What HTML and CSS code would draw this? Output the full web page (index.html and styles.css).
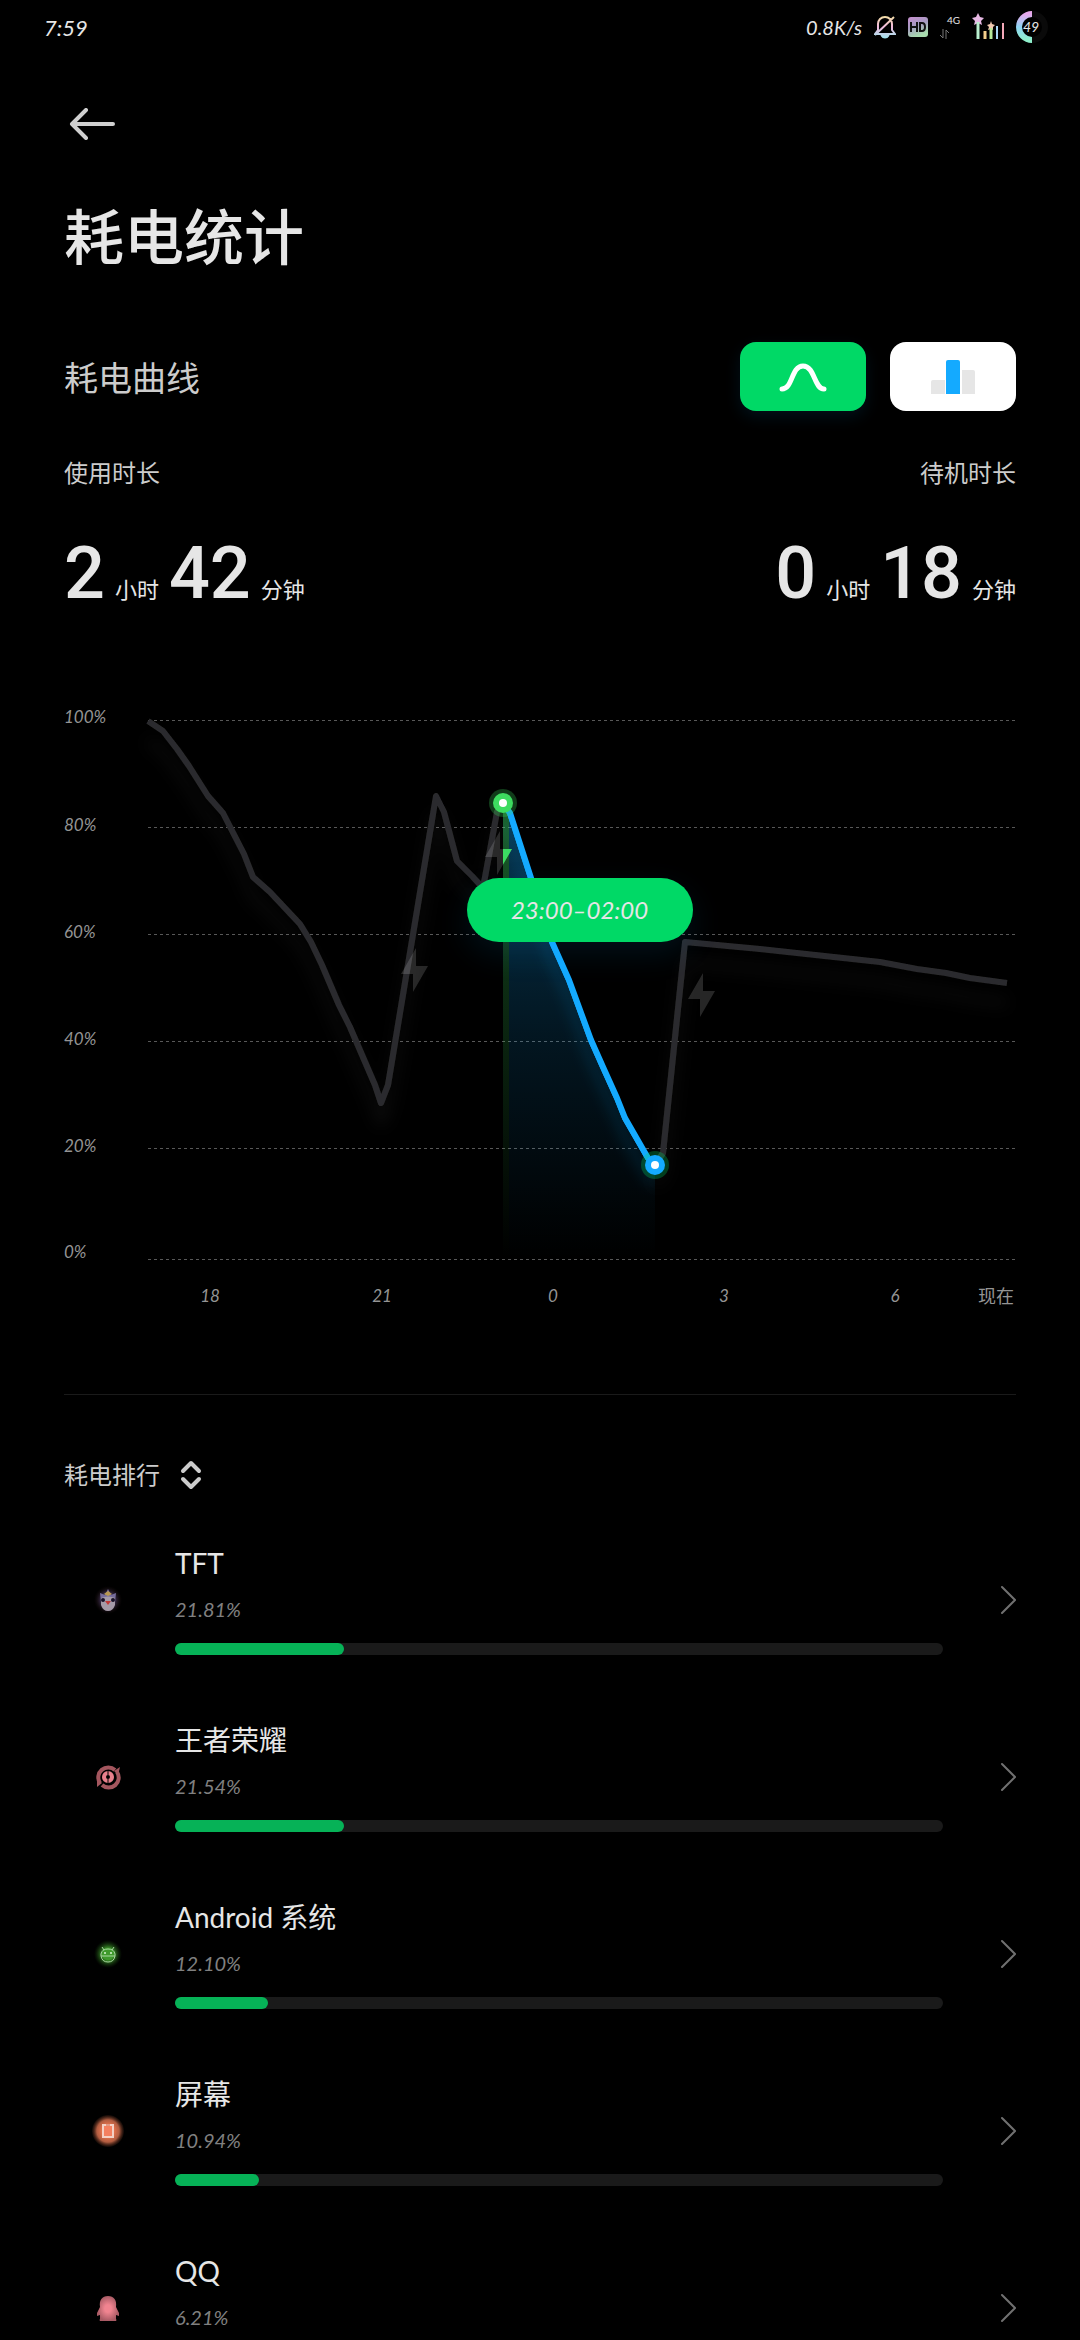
FILE: index.html
```
<!DOCTYPE html>
<html lang="zh-CN">
<head>
  <meta charset="UTF-8">
  <meta name="viewport" content="width=device-width, initial-scale=1.0">
  <title>耗电统计</title>
  <link rel="stylesheet" href="styles.css">
</head>
<body>
  <div class="page">
    <div class="status-bar">
      <span class="clock">7:59</span>
      <div class="status-icons">
        <span class="speed">0.8K/s</span>
        <svg width="22" height="24" viewBox="0 0 22 24" fill="none" stroke="url(#holo)" stroke-width="2">
          <defs>
            <linearGradient id="holo" x1="0" y1="0" x2="0" y2="24" gradientUnits="userSpaceOnUse">
              <stop offset="0" stop-color="#f3e3a0"/>
              <stop offset=".5" stop-color="#f0b8dc"/>
              <stop offset="1" stop-color="#9be8f0"/>
            </linearGradient>
          </defs>
          <path d="M1 19h20l-3-4V9c0-4-3-7-7-7S4 5 4 9v6zM1 20L20 2"/>
          <path d="M8 21c1 2 5 2 6 0z" fill="#9be8f0"/>
        </svg>
        <svg width="20" height="22" viewBox="0 0 20 22">
          <defs>
            <linearGradient id="hd" x1="0" y1="0" x2=".4" y2="1">
              <stop offset="0" stop-color="#c78fd0"/>
              <stop offset=".5" stop-color="#a59ac0"/>
              <stop offset="1" stop-color="#a8dcae"/>
            </linearGradient>
          </defs>
          <rect y="1" width="20" height="20" rx="3" fill="url(#hd)"/>
          <path d="M3 6v10M9 6v10M3 11h6M12 7v8h2c2 0 3-2 3-4s-1-4-3-4z" fill="none" stroke="#111" stroke-width="2"/>
        </svg>
        <div class="network">
          <span>4G</span>
          <svg width="10" height="10" viewBox="0 0 10 10" fill="none" stroke="#777" stroke-width="1">
            <path d="M3 0v9L0 6M6 10V1l3 3"/>
          </svg>
        </div>
        <svg width="32" height="28" viewBox="0 0 32 28">
          <path d="M6 0l2 4 4 1-3 3 1 4-4-2-4 2 1-4-3-3 4-1z" fill="#e6b8e4"/>
          <path d="M19 8l1 3 3 1-2 2v3l-2-1-3 1 1-3-2-2 3-1z" fill="#f0c8b0"/>
          <path d="M6 9v17" stroke="#b9f0cf" stroke-width="3"/>
          <path d="M13 18v8" stroke="#f4d08c" stroke-width="3"/>
          <path d="M19 15v11" stroke="#b6e89a" stroke-width="3"/>
          <path d="M25 13v13" stroke="#a8d4f4" stroke-width="2"/>
          <path d="M31 10v16" stroke="#f4a8b8" stroke-width="2"/>
        </svg>
        <svg width="32" height="32" viewBox="0 0 32 32">
          <defs>
            <linearGradient id="ring" x1="0" y1="0" x2="0" y2="1">
              <stop offset="0" stop-color="#e8a8ec"/>
              <stop offset=".5" stop-color="#8fd4f4"/>
              <stop offset="1" stop-color="#8ff0cc"/>
            </linearGradient>
          </defs>
          <circle cx="16" cy="16" r="13" fill="none" stroke="#0a0a0a" stroke-width="6"/>
          <path d="M16 3a13 13 0 0 0 0 26" fill="none" stroke="url(#ring)" stroke-width="6"/>
          <text class="battery-text" x="15" y="21" text-anchor="middle">49</text>
        </svg>
      </div>
    </div>

    <header class="header">
      <button class="back" aria-label="返回">
        <svg width="54" height="32" viewBox="0 0 54 32" fill="none" stroke="#d0d0d0" stroke-width="4" stroke-linecap="round" stroke-linejoin="round">
          <path d="M49 16H8M22 2L8 16l14 14"/>
        </svg>
      </button>
      <h1>耗电统计</h1>
    </header>

    <section class="curve-head">
      <h2>耗电曲线</h2>
      <div class="toggles">
        <button class="toggle active" aria-label="曲线图">
          <svg width="48" height="36" viewBox="0 0 48 36" fill="none" stroke="#fff" stroke-width="5" stroke-linecap="round">
            <path d="M3 30C14 30 12 7 24 7s11 23 21 23"/>
          </svg>
        </button>
        <button class="toggle" aria-label="柱状图">
          <svg width="44" height="34" viewBox="0 0 44 34">
            <path d="M0 34V22q0-2 2-2h12v14z" fill="#e6e6e6"/>
            <path d="M31 34V10h11q2 0 2 2v22z" fill="#e6e6e6"/>
            <path d="M15 34V2q0-2 2-2h10q2 0 2 2v32z" fill="#14aaff"/>
          </svg>
        </button>
      </div>
    </section>

    <section class="metrics">
      <div class="metric">
        <div class="metric-label">使用时长</div>
        <div class="metric-value"><b>2</b><span>小时</span><b>42</b><span>分钟</span></div>
      </div>
      <div class="metric metric-right">
        <div class="metric-label">待机时长</div>
        <div class="metric-value"><b>0</b><span>小时</span><b>18</b><span>分钟</span></div>
      </div>
    </section>

    <section class="chart">
      <svg viewBox="0 0 1080 630">
        <defs>
          <filter id="soft" x="-10%" y="-10%" width="120%" height="130%">
            <feDropShadow dx="0" dy="20" stdDeviation="8" flood-color="#fff" flood-opacity=".06"/>
          </filter>
          <filter id="softBlue" x="-30%" y="-10%" width="160%" height="130%">
            <feDropShadow dx="0" dy="18" stdDeviation="7" flood-color="#14aaff" flood-opacity=".2"/>
          </filter>
          <linearGradient id="area" x1="0" y1="0" x2="0" y2="1">
            <stop offset="0" stop-color="#14aaff" stop-opacity=".32"/>
            <stop offset=".5" stop-color="#14aaff" stop-opacity=".13"/>
            <stop offset="1" stop-color="#14aaff" stop-opacity="0"/>
          </linearGradient>
          <linearGradient id="charge" x1="0" y1="0" x2="0" y2="1">
            <stop offset="0" stop-color="#3ddc5f" stop-opacity=".45"/>
            <stop offset=".4" stop-color="#3ddc5f" stop-opacity=".2"/>
            <stop offset="1" stop-color="#3ddc5f" stop-opacity="0"/>
          </linearGradient>
          <clipPath id="selected"><path d="M503 113L510 123L531 188L552 252L565 282L569 290L591 350L603 377L617 408L625 428L648 468L655 475V569H503z"/></clipPath>
          <path id="bolt" d="M15 0L0 26H12V44L27 18H15z"/>
        </defs>

        <g class="grid-lines">
          <path d="M148 30.5H1016M148 137.5H1016M148 244.5H1016M148 351.5H1016M148 458.5H1016M148 569.5H1016"/>
        </g>

        <g class="axis">
          <text x="64" y="33">100%</text>
          <text x="64" y="141">80%</text>
          <text x="64" y="248">60%</text>
          <text x="64" y="355">40%</text>
          <text x="64" y="462">20%</text>
          <text x="64" y="568">0%</text>
          <g text-anchor="middle">
            <text x="210" y="612">18</text>
            <text x="382" y="612">21</text>
            <text x="553" y="612">0</text>
            <text x="724" y="612">3</text>
            <text x="895" y="612">6</text>
          </g>
          <text class="now" x="1014" y="613" text-anchor="end">现在</text>
        </g>

        <g class="line-idle" filter="url(#soft)">
          <path d="M148 31L163 41L177 59L189 76L208 106L223 123L244 164L253 187L270 202L300 234L311 252L322 275L339 315L350 337L375 395L381 413L388 395L436 106L444 122L457 171L472 186L483 198L497 122L503 113"/>
          <path d="M655 475L663 463L681 290L685 252L760 259L880 272L917 279L946 283L970 288L1007 293"/>
        </g>

        <rect x="503" y="113" width="6" height="456" fill="url(#charge)"/>
        <path d="M509 121L531 188L552 252L569 290L591 350L603 377L617 408L625 428L648 468L655 475V569H509z" fill="url(#area)"/>

        <g fill="#fff" fill-opacity=".15">
          <use href="#bolt" x="401" y="258"/>
          <use href="#bolt" x="485" y="141"/>
          <use href="#bolt" x="688" y="283"/>
        </g>
        <g clip-path="url(#selected)">
          <use href="#bolt" x="485" y="141" fill="#3ddc5f"/>
          <path class="line-active" filter="url(#softBlue)" d="M503 113L510 123L531 188L552 252L569 290L591 350L603 377L617 408L625 428L648 468L655 475"/>
        </g>
        <path class="line-active" d="M503 113L510 123L531 188L552 252L569 290L591 350L603 377L617 408L625 428L648 468L655 475"/>

        <circle cx="503" cy="113" r="14" fill="#3ddc5f" fill-opacity=".28"/>
        <circle cx="503" cy="113" r="10" fill="#3ddc5f"/>
        <circle cx="503" cy="113" r="4" fill="#fff"/>
        <circle cx="655" cy="475" r="14" fill="#00d966" fill-opacity=".28"/>
        <circle cx="655" cy="475" r="10" fill="#14aaff"/>
        <circle cx="655" cy="475" r="4" fill="#fff"/>
      </svg>
      <div class="tooltip">23:00–02:00</div>
    </section>

    <section class="ranking">
      <button class="sort">
        耗电排行
        <svg width="22" height="30" viewBox="0 0 22 30" fill="none" stroke="#ccc" stroke-width="4" stroke-linecap="round" stroke-linejoin="round">
          <path d="M3 11l8-8 8 8M3 19l8 8 8-8"/>
        </svg>
      </button>

      <ul class="app-list">
        <li>
          <a class="app" href="#">
            <svg class="app-icon" width="32" height="32" viewBox="0 0 32 32">
              <defs>
                <radialGradient id="tftGlow">
                  <stop offset=".4" stop-color="#4a3a68"/>
                  <stop offset="1" stop-color="#20100c" stop-opacity="0"/>
                </radialGradient>
              </defs>
              <circle cx="16" cy="16" r="14" fill="url(#tftGlow)"/>
              <path d="M8 9l5 2 3-6 3 6 5-2-1 9H9z" fill="#766c9c"/>
              <path d="M12 10l4 2 4-2-4-3z" fill="#b89850"/>
              <path d="M9 14q7-3 14 0v7q-2 6-7 6t-7-6z" fill="#a59aa8"/>
              <circle cx="11" cy="16" r="2" fill="#181028"/>
              <circle cx="21" cy="16" r="2" fill="#181028"/>
              <path d="M13 17h6l-3 4z" fill="#c03838"/>
            </svg>
            <div class="app-body">
              <div class="app-name">TFT</div>
              <div class="app-percent">21.81%</div>
              <div class="bar"><div class="bar-fill" style="width: 22%"></div></div>
            </div>
            <svg class="chevron" width="18" height="30" viewBox="0 0 18 30"><path d="M4 2l13 13L4 28"/></svg>
          </a>
        </li>
        <li>
          <a class="app" href="#">
            <svg class="app-icon" width="32" height="32" viewBox="0 0 32 32" fill="none">
              <path d="M8 22A10 10 0 0 1 23 9M25 11A10 10 0 0 1 10 24" stroke="#a4565e" stroke-width="4"/>
              <path d="M22 10l6-4-2 8zM10 22l-5 4v-9z" fill="#a4565e"/>
              <circle cx="16" cy="16" r="4" stroke="#e8808c" stroke-width="4"/>
              <path d="M16 9v5M16 18v5" stroke="#000" stroke-width="1"/>
            </svg>
            <div class="app-body">
              <div class="app-name">王者荣耀</div>
              <div class="app-percent">21.54%</div>
              <div class="bar"><div class="bar-fill" style="width: 22%"></div></div>
            </div>
            <svg class="chevron" width="18" height="30" viewBox="0 0 18 30"><path d="M4 2l13 13L4 28"/></svg>
          </a>
        </li>
        <li>
          <a class="app" href="#">
            <svg class="app-icon" width="32" height="32" viewBox="0 0 32 32" fill="none">
              <defs>
                <radialGradient id="androidGlow">
                  <stop offset=".4" stop-color="#3f9a2c"/>
                  <stop offset="1" stop-color="#143a0c" stop-opacity="0"/>
                </radialGradient>
              </defs>
              <circle cx="16" cy="16" r="14" fill="url(#androidGlow)"/>
              <path d="M10 9l2 3M22 9l-2 3M9 18v-2q1-5 7-5t7 5v2zM9 18q1 6 7 6t7-6" stroke="#a8d8a0" stroke-width="1"/>
              <circle cx="13" cy="15" r="1" fill="#d8f4d0"/>
              <circle cx="19" cy="15" r="1" fill="#d8f4d0"/>
            </svg>
            <div class="app-body">
              <div class="app-name">Android 系统</div>
              <div class="app-percent">12.10%</div>
              <div class="bar"><div class="bar-fill" style="width: 12.1%"></div></div>
            </div>
            <svg class="chevron" width="18" height="30" viewBox="0 0 18 30"><path d="M4 2l13 13L4 28"/></svg>
          </a>
        </li>
        <li>
          <a class="app" href="#">
            <svg class="app-icon" width="32" height="32" viewBox="0 0 32 32">
              <defs>
                <radialGradient id="screenGlow">
                  <stop offset=".3" stop-color="#f07850"/>
                  <stop offset=".7" stop-color="#b05c40"/>
                  <stop offset="1" stop-color="#5a2c1c" stop-opacity=".2"/>
                </radialGradient>
              </defs>
              <circle cx="16" cy="16" r="16" fill="url(#screenGlow)"/>
              <rect x="11" y="10" width="10" height="12" fill="#f48060" stroke="#f4d0c4" stroke-width="2"/>
              <path d="M14 10h4" stroke="#d06040" stroke-width="1"/>
            </svg>
            <div class="app-body">
              <div class="app-name">屏幕</div>
              <div class="app-percent">10.94%</div>
              <div class="bar"><div class="bar-fill" style="width: 11%"></div></div>
            </div>
            <svg class="chevron" width="18" height="30" viewBox="0 0 18 30"><path d="M4 2l13 13L4 28"/></svg>
          </a>
        </li>
        <li>
          <a class="app" href="#">
            <svg class="app-icon" width="32" height="32" viewBox="0 0 32 32">
              <defs>
                <radialGradient id="qqBody">
                  <stop offset=".3" stop-color="#f08490"/>
                  <stop offset="1" stop-color="#a85a64"/>
                </radialGradient>
              </defs>
              <path d="M16 4c6 0 9 4 8 11l3 6v3l-3-1v4q1 1 0 2H8q-1-1 0-2v-4l-3 1v-3l3-6C7 8 10 4 16 4z" fill="url(#qqBody)"/>
            </svg>
            <div class="app-body">
              <div class="app-name">QQ</div>
              <div class="app-percent">6.21%</div>
              <div class="bar"><div class="bar-fill" style="width: 6.2%"></div></div>
            </div>
            <svg class="chevron" width="18" height="30" viewBox="0 0 18 30"><path d="M4 2l13 13L4 28"/></svg>
          </a>
        </li>
      </ul>
    </section>
  </div>
</body>
</html>
```

FILE: styles.css
```
:root {
  --bg: #000;
  --text: #e6e6e6;
  --text-soft: #ccc;
  --green: #00d966;
  --bar: #06b257;
  --track: #1a1a1a;
  --side: 64px;
}

* {
  box-sizing: border-box;
}

body {
  margin: 0;
  background: var(--bg);
  color: var(--text);
  font-family: Lato, "Noto Sans CJK SC", sans-serif;
}

button {
  padding: 0;
  border: none;
  background: none;
  color: inherit;
  font: inherit;
  cursor: pointer;
}

svg {
  display: block;
}

h1, h2 {
  margin: 0;
  font-weight: 400;
}

.page {
  height: 100vh;
  overflow-y: auto;
  scrollbar-width: none;
}

/* status bar */
.status-bar {
  display: flex;
  justify-content: space-between;
  align-items: center;
  height: 54px;
  padding: 0 32px 0 44px;
}

.clock {
  font-size: 22px;
  font-style: italic;
}

.status-icons {
  display: flex;
  align-items: center;
  gap: 12px;
}

.speed {
  font-size: 20px;
  font-style: italic;
}

.network {
  display: flex;
  flex-direction: column;
  width: 20px;
  gap: 4px;
}

.network span {
  align-self: flex-end;
  font-size: 10px;
  line-height: 10px;
}

.battery-text {
  fill: var(--text);
  font-size: 14px;
  font-style: italic;
}

/* title */
.header {
  padding: 46px var(--side) 0;
}

.back {
  display: flex;
  align-items: center;
  height: 48px;
}

.header h1 {
  margin-top: 53px;
  font-size: 60px;
  font-weight: 500;
  line-height: 72px;
}

.curve-head {
  display: flex;
  justify-content: space-between;
  align-items: center;
  padding: 69px var(--side) 0;
}

.curve-head h2 {
  color: var(--text-soft);
  font-size: 34px;
}

.toggles {
  display: flex;
  gap: 24px;
}

.toggle {
  display: flex;
  justify-content: center;
  align-items: center;
  width: 126px;
  height: 69px;
  border-radius: 16px;
  background: #fff;
}

.toggle.active {
  background: var(--green);
  box-shadow: 0 6px 16px rgba(20, 170, 255, 0.1);
}

/* usage time */
.metrics {
  display: flex;
  justify-content: space-between;
  padding: 46px var(--side) 0;
}

.metric-label {
  color: var(--text-soft);
  font-size: 24px;
  line-height: 32px;
}

.metric-right .metric-label {
  text-align: right;
}

.metric-value {
  display: flex;
  align-items: baseline;
  gap: 10px;
  height: 80px;
  margin-top: 45px;
}

.metric-value b {
  font-family: Roboto, sans-serif;
  font-size: 72px;
  font-weight: 500;
  line-height: 80px;
}

.metric-value span {
  font-size: 22px;
}

/* chart */
.chart {
  position: relative;
  margin-top: 76px;
}

.chart svg {
  width: 100%;
}

.grid-lines path {
  stroke: #585858;
  stroke-width: 1;
  stroke-dasharray: 3 3;
}

.axis text {
  fill: #949494;
  font-size: 17px;
  font-style: italic;
}

.axis .now {
  font-size: 18px;
  font-style: normal;
}

.line-idle path,
.line-active {
  fill: none;
  stroke: #2c2c2e;
  stroke-width: 6;
  stroke-linejoin: round;
}

.line-active {
  stroke: #14aaff;
}

.tooltip {
  position: absolute;
  top: 188px;
  left: 43.2%;
  width: 226px;
  border-radius: 32px;
  background: var(--green);
  box-shadow: 0 12px 32px rgba(20, 170, 255, 0.1);
  font-size: 24px;
  font-style: italic;
  line-height: 64px;
  text-align: center;
}

/* ranking */
.ranking {
  margin: 74px var(--side) 0;
  padding-top: 64px;
  border-top: 1px solid var(--track);
}

.sort {
  display: flex;
  align-items: center;
  gap: 20px;
  color: var(--text-soft);
  font-size: 24px;
  line-height: 32px;
}

.app-list {
  margin: 20px 0 0;
  padding: 0;
  list-style: none;
}

.app {
  display: grid;
  grid-template-columns: 87px 1fr 49px;
  align-items: center;
  column-gap: 24px;
  height: 177px;
  color: inherit;
  text-decoration: none;
}

.app-icon {
  justify-self: center;
}

.app-name {
  font-size: 28px;
  line-height: 36px;
}

.app-percent {
  margin: 16px 0 22px;
  color: #808080;
  font-size: 20px;
  font-style: italic;
  line-height: 24px;
}

.bar {
  height: 12px;
  border-radius: 6px;
  background: var(--track);
}

.bar-fill {
  height: 100%;
  border-radius: 6px;
  background: var(--bar);
}

.chevron {
  justify-self: end;
  fill: none;
  stroke: #707070;
  stroke-width: 2;
  stroke-linecap: round;
}
```
